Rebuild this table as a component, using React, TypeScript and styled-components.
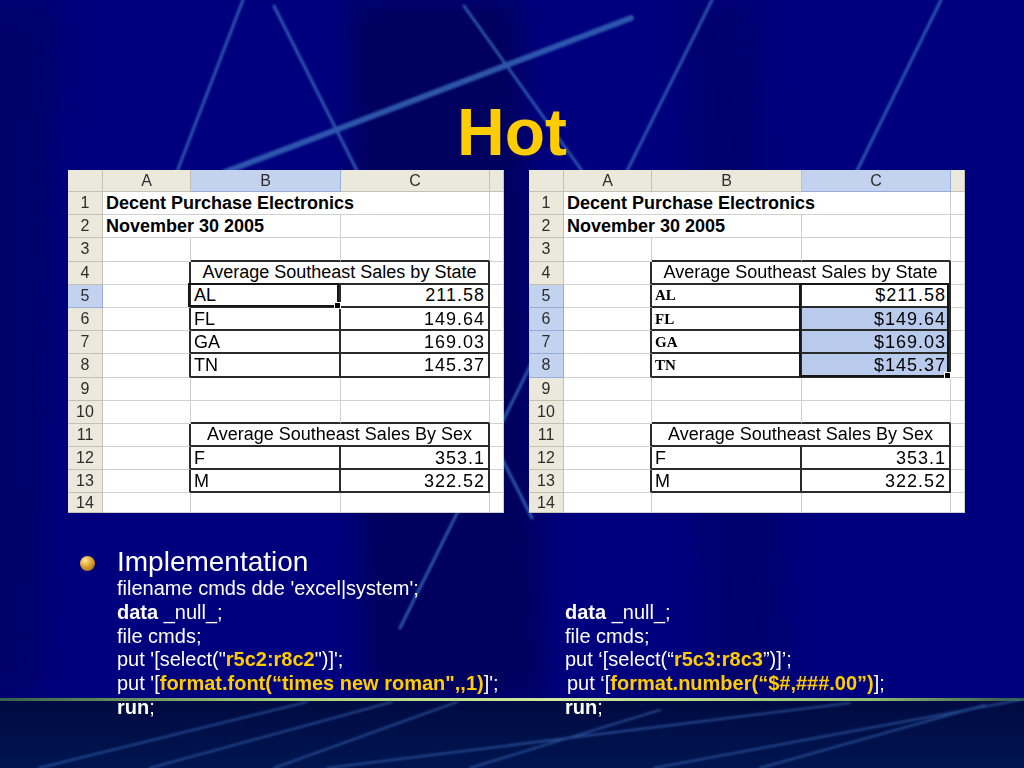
import React from "react";
import styled, { createGlobalStyle } from "styled-components";

const GRID = "#d0d0d0";
const DARK = "#2a2a2a";
const SANS = '"Liberation Sans", Arial, sans-serif';
const SERIF = '"Liberation Serif", "Times New Roman", serif';

const GlobalStyle = createGlobalStyle`
  html, body { margin: 0; padding: 0; background: #00007c; }
  body { font-family: ${SANS}; }
  #root { width: 1024px; height: 768px; }
`;

const Slide = styled.div`
  position: relative;
  width: 1024px;
  height: 768px;
  overflow: hidden;
  background: #00007e;
`;

const Backdrop = styled.svg`
  position: absolute;
  left: 0;
  top: 0;
  width: 1024px;
  height: 768px;
`;

const Content = styled.div`
  position: relative;
  display: flex;
  flex-direction: column;
  padding-top: 100px;
`;

const Title = styled.h1`
  margin: 0 0 6px;
  height: 64px;
  font: bold 66px/64px ${SANS};
  color: #ffcc00;
  text-align: center;
`;

const SheetRow = styled.div`
  display: flex;
  gap: 25px;
  padding-left: 68px;
  height: 343px;
`;

const Sheet = styled.div`
  display: grid;
  grid-template-columns: 35px 88px 150px 149px 14px;
  grid-template-rows: 22px repeat(13, 23.2px) 20px;
  width: 436px;
  height: 343px;
  overflow: hidden;
  background: #fff;
`;

const HeadCell = styled.div<{ $sel?: boolean }>`
  display: flex;
  align-items: center;
  justify-content: center;
  box-sizing: border-box;
  background: ${(p) => (p.$sel ? "#c2d2ef" : "#ebe9dc")};
  border-right: 1px solid ${(p) => (p.$sel ? "#97acd8" : "#c4c1b4")};
  border-bottom: 1px solid ${(p) => (p.$sel ? "#97acd8" : "#c4c1b4")};
  font: 16px ${SANS};
  color: #2d2d2d;
`;

type CellProps = {
  $span?: number;
  $r?: boolean;
  $b?: boolean;
  $align?: "left" | "center" | "right";
  $bold?: boolean;
  $serif?: boolean;
  $fill?: string;
  $num?: boolean;
};

const Cell = styled.div<CellProps>`
  position: relative;
  grid-column: span ${(p) => p.$span ?? 1};
  display: flex;
  align-items: center;
  justify-content: ${(p) =>
    p.$align === "right" ? "flex-end" : p.$align === "center" ? "center" : "flex-start"};
  box-sizing: border-box;
  padding: 1px 3px 0 3px;
  border-right: ${(p) => (p.$r ? `2px solid ${DARK}` : `1px solid ${GRID}`)};
  border-bottom: ${(p) => (p.$b ? `2px solid ${DARK}` : `1px solid ${GRID}`)};
  background: ${(p) => p.$fill ?? "#fff"};
  color: #000;
  white-space: nowrap;
  font-family: ${(p) => (p.$serif ? SERIF : SANS)};
  font-size: ${(p) => (p.$serif ? 15 : 18)}px;
  font-weight: ${(p) => (p.$bold ? 700 : 400)};
  letter-spacing: ${(p) => (p.$num ? "1px" : "0")};
`;

const Selection = styled.span<{ $rows: number }>`
  position: absolute;
  left: -3px;
  top: -2px;
  width: calc(100% + 3px);
  height: ${(p) => p.$rows * 23.2 + 1}px;
  box-sizing: border-box;
  border: 2px solid #151515;
  pointer-events: none;
  z-index: 2;
`;

const Handle = styled.span`
  position: absolute;
  right: -4px;
  bottom: -4px;
  width: 5px;
  height: 5px;
  background: #000;
  border: 1px solid #fff;
`;

const Lower = styled.div`
  display: flex;
  align-items: flex-start;
  padding: 33px 0 0 80px;
`;

const Bullet = styled.span`
  flex: none;
  width: 15px;
  height: 15px;
  margin-top: 10px;
  border-radius: 50%;
  background: radial-gradient(circle at 35% 30%, #ffe8a0 0%, #e3a935 40%, #8b5a0e 100%);
`;

const Body = styled.div`
  display: flex;
  flex-direction: column;
  margin-left: 22px;
`;

const Heading = styled.div`
  font: 28px/31px ${SANS};
  color: #fff;
`;

const CodeGrid = styled.div`
  display: grid;
  grid-template-columns: 448px auto;
  font: 20px/23.8px ${SANS};
  color: #fff;
  white-space: pre;
`;

const Line = styled.div<{ $shift?: number }>`
  padding-left: ${(p) => p.$shift ?? 0}px;
`;

const Kw = styled.b`
  font-weight: 700;
`;

const Hl = styled.b`
  font-weight: 700;
  color: #ffcc00;
`;

const states: [string, string, string][] = [
  ["AL", "211.58", "$211.58"],
  ["FL", "149.64", "$149.64"],
  ["GA", "169.03", "$169.03"],
  ["TN", "145.37", "$145.37"],
];

function Spreadsheet({ formatted }: { formatted?: boolean }) {
  const rowSel = (r: number) => (formatted ? r >= 5 && r <= 8 : r === 5);
  const cells: React.ReactNode[] = [
    <HeadCell key="corner" />,
    <HeadCell key="A">A</HeadCell>,
    <HeadCell key="B" $sel={!formatted}>B</HeadCell>,
    <HeadCell key="C" $sel={formatted}>C</HeadCell>,
    <HeadCell key="D" />,
  ];
  for (let r = 1; r <= 14; r++) {
    cells.push(
      <HeadCell key={`h${r}`} $sel={rowSel(r)}>
        {r}
      </HeadCell>
    );
    const k = (c: string) => `${c}${r}`;
    if (r === 1) {
      cells.push(
        <Cell key={k("A")} $span={3} $bold>
          Decent Purchase Electronics
        </Cell>
      );
    } else if (r === 2) {
      cells.push(
        <Cell key={k("A")} $span={2} $bold>
          November 30 2005
        </Cell>,
        <Cell key={k("C")} />
      );
    } else if (r === 3 || r === 10) {
      cells.push(<Cell key={k("A")} />, <Cell key={k("B")} $b />, <Cell key={k("C")} $b />);
    } else if (r === 4 || r === 11) {
      cells.push(
        <Cell key={k("A")} $r />,
        <Cell key={k("B")} $span={2} $r $b $align="center">
          {r === 4 ? "Average Southeast Sales by State" : "Average Southeast Sales By Sex"}
        </Cell>
      );
    } else if (r >= 5 && r <= 8) {
      const [st, plain, money] = states[r - 5];
      const active = r === 5;
      cells.push(
        <Cell key={k("A")} $r />,
        <Cell key={k("B")} $r $b $serif={formatted} $bold={formatted}>
          {st}
          {!formatted && active && (
            <Selection $rows={1}>
              <Handle />
            </Selection>
          )}
        </Cell>,
        <Cell
          key={k("C")}
          $r
          $b
          $align="right"
          $num
          $fill={formatted && !active ? "#b9cbed" : undefined}
        >
          {formatted ? money : plain}
          {formatted && active && (
            <Selection $rows={4}>
              <Handle />
            </Selection>
          )}
        </Cell>
      );
    } else if (r === 12 || r === 13) {
      const [sx, v] = r === 12 ? ["F", "353.1"] : ["M", "322.52"];
      cells.push(
        <Cell key={k("A")} $r />,
        <Cell key={k("B")} $r $b>
          {sx}
        </Cell>,
        <Cell key={k("C")} $r $b $align="right" $num>
          {v}
        </Cell>
      );
    } else {
      cells.push(<Cell key={k("A")} />, <Cell key={k("B")} />, <Cell key={k("C")} />);
    }
    cells.push(<Cell key={k("D")} />);
  }
  return <Sheet>{cells}</Sheet>;
}

function Background() {
  return (
    <Backdrop viewBox="0 0 1024 768" aria-hidden>
      <defs>
        <linearGradient id="floor" x1="0" y1="0" x2="0" y2="1">
          <stop offset="0" stopColor="#000a42" />
          <stop offset="1" stopColor="#00154f" />
        </linearGradient>
        <linearGradient id="rule" x1="0" y1="0" x2="1" y2="0">
          <stop offset="0" stopColor="#35604a" />
          <stop offset="0.28" stopColor="#a6d07c" />
          <stop offset="0.55" stopColor="#d2ea9e" />
          <stop offset="0.85" stopColor="#8fbd74" />
          <stop offset="1" stopColor="#2f5a4a" />
        </linearGradient>
        <filter id="soft" x="-20%" y="-5%" width="140%" height="110%">
          <feGaussianBlur stdDeviation="14" />
        </filter>
        <filter id="glow" x="-5%" y="-5%" width="110%" height="110%">
          <feGaussianBlur stdDeviation="0.8" />
        </filter>
      </defs>
      <rect width="1024" height="768" fill="#00007e" />
      <g filter="url(#soft)">
        <polygon points="-30,0 58,0 40,700 -30,700" fill="#000050" opacity="0.45" />
        <polygon points="350,0 520,0 545,700 365,700" fill="#00003c" opacity="0.5" />
        <polygon points="685,0 755,0 790,700 705,700" fill="#00004e" opacity="0.35" />
      </g>
      <g stroke="#3466b6" strokeLinecap="round" fill="none" opacity="0.85" filter="url(#glow)">
        <line x1="243" y1="0" x2="170" y2="190" strokeWidth="3" />
        <line x1="274" y1="6" x2="532" y2="518" strokeWidth="3" />
        <line x1="631" y1="18" x2="225" y2="172" strokeWidth="6" />
        <line x1="464" y1="6" x2="585" y2="175" strokeWidth="3" />
        <line x1="712" y1="0" x2="400" y2="628" strokeWidth="3" />
        <line x1="941" y1="0" x2="850" y2="185" strokeWidth="3" />
      </g>
      <rect y="700" width="1024" height="68" fill="url(#floor)" />
      <rect y="698" width="1024" height="3" fill="url(#rule)" />
      <g
        stroke="#3f72c4"
        strokeLinecap="round"
        fill="none"
        strokeWidth="2"
        opacity="0.6"
        filter="url(#glow)"
      >
        <line x1="39" y1="768" x2="307" y2="702" />
        <line x1="150" y1="768" x2="392" y2="702" />
        <line x1="274" y1="768" x2="457" y2="702" />
        <line x1="327" y1="768" x2="850" y2="703" />
        <line x1="470" y1="768" x2="660" y2="710" />
        <line x1="654" y1="768" x2="1020" y2="700" />
        <line x1="760" y1="768" x2="985" y2="705" />
      </g>
    </Backdrop>
  );
}

export default function App() {
  return (
    <>
      <GlobalStyle />
      <Slide>
        <Background />
        <Content>
          <Title>Hot</Title>
          <SheetRow>
            <Spreadsheet />
            <Spreadsheet formatted />
          </SheetRow>
          <Lower>
            <Bullet />
            <Body>
              <Heading>Implementation</Heading>
              <CodeGrid>
                <Line>filename cmds dde 'excel|system';</Line>
                <Line />
                <Line>
                  <Kw>data</Kw> _null_;
                </Line>
                <Line>
                  <Kw>data</Kw> _null_;
                </Line>
                <Line>file cmds;</Line>
                <Line>file cmds;</Line>
                <Line>
                  put '[select("<Hl>r5c2:r8c2</Hl>")]';
                </Line>
                <Line>
                  put ‘[select(“<Hl>r5c3:r8c3</Hl>”)]’;
                </Line>
                <Line>
                  put '[<Hl>format.font(“times new roman",,1)</Hl>]';
                </Line>
                <Line $shift={2}>
                  put ‘[<Hl>format.number(“$#,###.00”)</Hl>];
                </Line>
                <Line>
                  <Kw>run</Kw>;
                </Line>
                <Line>
                  <Kw>run</Kw>;
                </Line>
              </CodeGrid>
            </Body>
          </Lower>
        </Content>
      </Slide>
    </>
  );
}
